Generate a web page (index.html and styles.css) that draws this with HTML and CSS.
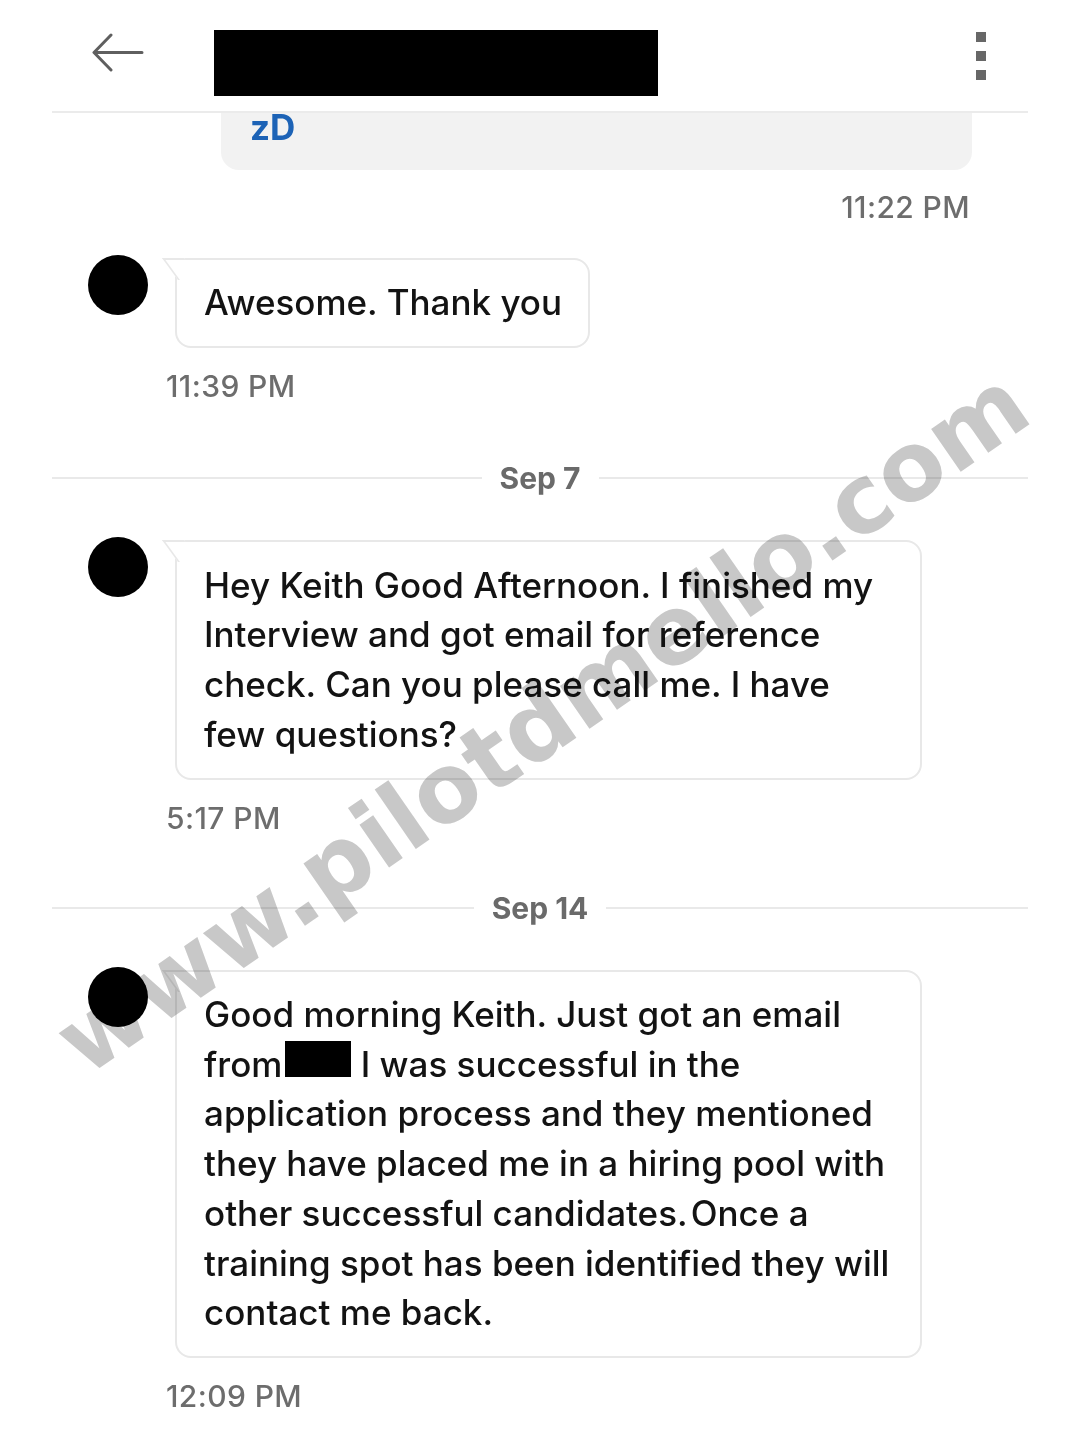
FILE: index.html
```html
<!DOCTYPE html>
<html lang="en">
<head>
  <meta charset="UTF-8" />
  <meta name="viewport" content="width=device-width, initial-scale=1.0"/>
  <title>Messages</title>
  <link rel="stylesheet" href="styles.css">
</head>
<body>
  <div class="screen">
    <header class="topbar">
      <button class="back" aria-label="Back">
        <svg width="52" height="40" viewBox="0 0 52 40" fill="none" stroke="#5f5f5f" stroke-width="3" stroke-linecap="round" stroke-linejoin="round">
          <path d="M50 19.5 H3 M19 2 L2 19.5 L19 37"/>
        </svg>
      </button>
      <div class="name-redacted"></div>
      <div class="kebab"><span></span><span></span><span></span></div>
    </header>

    <main class="thread">
      <div class="prev-bubble"><span class="link">zD</span></div>
      <div class="time time-right">11:22 PM</div>

      <div class="msg msg-first">
        <div class="avatar"></div>
        <div class="bubble">Awesome. Thank you</div>
      </div>
      <div class="time">11:39 PM</div>

      <div class="day"><span>Sep 7</span></div>

      <div class="msg">
        <div class="avatar"></div>
        <div class="bubble wide">Hey Keith Good Afternoon. I finished my<br>Interview and got email for reference<br>check. Can you please call me. I have<br>few questions?</div>
      </div>
      <div class="time">5:17 PM</div>

      <div class="day day-later"><span>Sep 14</span></div>

      <div class="msg">
        <div class="avatar"></div>
        <div class="bubble wide">Good morning Keith. Just got an email<br>from<span class="redacted"></span> I was successful in the<br>application process and they mentioned<br>they have placed me in a hiring pool with<br>other successful candidates.&#8202;Once a<br>training spot has been identified they will<br>contact me back.</div>
      </div>
      <div class="time">12:09 PM</div>
    </main>

    <div class="watermark">www.pilotdmello.com</div>
  </div>
</body>
</html>
```

FILE: styles.css
```css
body {
  margin: 0;
  background: #fff;
  font-family: Inter, "Liberation Sans", sans-serif;
}

.screen {
  position: relative;
  width: 1080px;
  height: 1440px;
  overflow: hidden;
  background: #fff;
}

/* header */
.topbar {
  display: flex;
  align-items: flex-start;
  box-sizing: border-box;
  height: 113px;
  margin: 0 52px;
  padding: 0 42px 0 40px;
  border-bottom: 2px solid #ebebeb;
}

.back {
  margin-top: 33px;
  padding: 0;
  border: none;
  background: none;
  line-height: 0;
}

.name-redacted {
  width: 444px;
  height: 66px;
  margin: 30px 0 0 70px;
  background: #000;
}

.kebab {
  display: flex;
  flex-direction: column;
  gap: 9px;
  margin: 32px 0 0 auto;
}

.kebab span {
  width: 10px;
  height: 10px;
  background: #676767;
}

/* thread */
.thread {
  padding: 0 52px;
}

.prev-bubble {
  box-sizing: border-box;
  width: 751px;
  height: 57px;
  margin-left: 169px;
  padding: 1px 0 0 29px;
  background: #f2f2f2;
  border-radius: 0 0 18px 18px;
}

.link {
  display: block;
  color: #1d63b6;
  font-size: 35px;
  font-weight: 700;
  line-height: 26px;
}

.time {
  margin-top: 20px;
  padding-left: 114px;
  color: #6d6d6d;
  font-size: 30px;
  font-weight: 500;
  letter-spacing: 0.4px;
  line-height: 36px;
}

.time-right {
  margin-top: 19px;
  padding: 0 58px 0 0;
  text-align: right;
}

.msg {
  display: flex;
  align-items: flex-start;
  margin-top: 41px;
  padding-left: 36px;
}

.msg-first {
  margin-top: 30px;
}

.avatar {
  flex: none;
  width: 60px;
  height: 60px;
  border-radius: 50%;
  background: #000;
}

.bubble {
  position: relative;
  margin: 3px 0 0 27px;
  padding: 18.3px 26px 18.3px 27px;
  background: #fff;
  border: 2px solid #e8e8e8;
  border-radius: 0 16px 16px 16px;
  color: #131313;
  font-size: 35px;
  font-weight: 500;
  line-height: 49.7px;
  white-space: nowrap;
}

.bubble::before {
  content: "";
  position: absolute;
  left: -15px;
  top: -2px;
  width: 20px;
  height: 20px;
  background: #fff;
  border-top: 2px solid #e8e8e8;
  border-left: 2px solid #e8e8e8;
  transform: skewX(36deg);
  transform-origin: top left;
}

.bubble.wide {
  box-sizing: border-box;
  width: 747px;
}

.redacted {
  display: inline-block;
  width: 66px;
  height: 36px;
  margin-left: 3px;
  background: #000;
}

.day {
  display: flex;
  align-items: center;
  gap: 18px;
  margin-top: 56px;
  color: #6a6a6a;
  font-size: 30px;
  font-weight: 700;
  line-height: 36px;
}

.day-later {
  margin-top: 54px;
}

.day::before,
.day::after {
  content: "";
  flex: 1;
  height: 2px;
  background: #e9e9e9;
}

/* watermark laid over the whole screenshot */
.watermark {
  position: absolute;
  left: 542px;
  top: 722px;
  transform: translate(-50%, -50%) rotate(-34.7deg);
  color: #c8c8c8;
  font-family: "DejaVu Sans", sans-serif;
  font-size: 95px;
  font-weight: 700;
  line-height: 1;
  white-space: nowrap;
  mix-blend-mode: multiply;
  pointer-events: none;
}
```
